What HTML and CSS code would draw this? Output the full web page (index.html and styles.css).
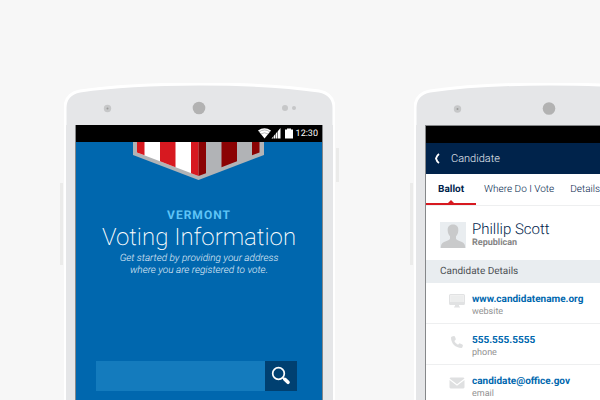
FILE: index.html
```html
<!DOCTYPE html>
<html lang="en">
<head>
<meta charset="utf-8">
<title>Voting Information</title>
<link rel="stylesheet" href="styles.css">
</head>
<body>
<main class="showcase">
  <section class="phone">
    <svg class="cap" viewBox="0 0 271 42" aria-hidden="true">
      <path class="shell" d="M1 44V25C1 15 6 10 16 8C50 3 95 1 135.500 1S221 3 255 8C265 10 270 15 270 25V44"/>
      <circle class="dot" cx="43.500" cy="25.500" r="3.700"/><circle class="pin" cx="43.500" cy="25.500" r="1"/>
      <circle class="speaker" cx="135" cy="25" r="6.300"/>
      <circle class="dot" cx="221" cy="25" r="3"/><circle class="dot" cx="230" cy="25" r="2"/>
    </svg>
    <span class="side volume"></span><span class="side power"></span>
    <div class="shell-body">
      <div class="screen home">
        <div class="status">
          <svg class="status-icons" viewBox="0 0 36 11" aria-hidden="true">
            <path d="M0 2.500Q6.500-2 13 2.500L6.500 10.500Z" fill="#fff"/>
            <path d="M1 4Q6.500 0 12 4M2.800 6Q6.500 3.500 10.200 6" fill="none" stroke="#777" stroke-width=".5"/>
            <path d="M22.500 0V10.500H13.500Z" fill="#fff"/>
            <path d="M15.500 7v4M17.500 5v6M19.500 3v8" stroke="#000" stroke-width=".5"/>
            <path d="M27 1.500h2V.500h4v1h2v9h-8z" fill="#fff"/>
          </svg>
          <time>12:30</time>
        </div>
        <svg class="shield" viewBox="0 0 131 38" aria-hidden="true">
          <path d="M0 0H131V13L65.500 38L0 13Z" fill="#b1b3b6"/>
          <path d="M4 0H65.500V34L4 10.500Z" fill="#fff"/>
          <path d="M4 0h7.500v13.300L4 10.500ZM27 0h15.500v25.200L27 19.300ZM58 0h7.500v34L58 31.200Z" fill="#d71920"/>
          <path d="M65.500 0H73v31.200L65.500 34ZM88.500 0H104v19.300L88.500 25.200ZM119 0h7.500v10.500L119 13.300Z" fill="#8b0304"/>
        </svg>
        <p class="state">VERMONT</p>
        <h1>Voting Information</h1>
        <p class="intro">Get started by providing your address<br>where you are registered to vote.</p>
        <form class="search">
          <input type="text" aria-label="Your address">
          <button type="button" aria-label="Search">
            <svg viewBox="0 0 20 20" aria-hidden="true"><circle cx="7.500" cy="7.500" r="5.800" fill="none" stroke="#fff" stroke-width="1.700"/><path d="M11.500 11.500l2 2" stroke="#fff" stroke-width="1.500"/><path d="M13.800 13.300l3.200 3" stroke="#fff" stroke-width="3.600" stroke-linecap="round"/></svg>
          </button>
        </form>
      </div>
    </div>
  </section>

  <section class="phone">
    <svg class="cap" viewBox="0 0 271 42" aria-hidden="true">
      <path class="shell" d="M1 44V25C1 15 6 10 16 8C50 3 95 1 135.500 1S221 3 255 8C265 10 270 15 270 25V44"/>
      <circle class="dot" cx="43.500" cy="26" r="3.700"/><circle class="pin" cx="43.500" cy="26" r="1"/>
      <circle class="speaker" cx="135" cy="25.500" r="6.300"/>
      <circle class="dot" cx="221" cy="25" r="3"/><circle class="dot" cx="230" cy="25" r="2"/>
    </svg>
    <span class="side volume"></span>
    <div class="shell-body">
      <div class="screen candidate">
        <div class="status"></div>
        <header class="bar">
          <a href="#" aria-label="Back"><svg viewBox="0 0 6 11" aria-hidden="true"><path d="M5 1Q2.800 2.500 2 5.500Q2.800 8.500 5 10" fill="none" stroke="#fff" stroke-width="1.900"/></svg></a>
          <h2>Candidate</h2>
        </header>
        <nav class="tabs">
          <a class="active" href="#">Ballot</a>
          <a href="#">Where Do I Vote</a>
          <a href="#">Details</a>
        </nav>
        <div class="profile">
          <svg viewBox="0 0 26 26" aria-hidden="true"><path fill="#e9edf0" d="M0 0h26v26H0z"/><path fill="#c9cacb" d="M13 2.500c3.700 0 5.700 2.300 5.300 6.200-.2 2.300-1.100 4.300-2.300 5.500v2.600c.6 1.600 3.400 2 6 3.200 2.400 1 3.200 3 3.200 6H.800c0-3 .8-5 3.200-6 2.600-1.200 5.400-1.600 6-3.200v-2.600c-1.200-1.200-2.100-3.200-2.300-5.500C7.300 4.800 9.300 2.500 13 2.500z"/></svg>
          <div>
            <h3>Phillip Scott</h3>
            <p>Republican</p>
          </div>
        </div>
        <h4>Candidate Details</h4>
        <ul class="contacts">
          <li>
            <svg viewBox="0 0 16 16" aria-hidden="true"><path fill="#e1e2e3" fill-rule="evenodd" d="M1.500 1h13q1.500 0 1.500 1.500v8q0 1.500-1.500 1.500H10v1.500h1v1H5v-1h1V12H1.500Q0 12 0 10.500v-8Q0 1 1.500 1zM1.300 2.300v6.700h13.400V2.300z"/><path fill="#eceded" d="M1.300 2.300h13.400v6.700H1.300z"/></svg>
            <div><a href="#">www.candidatename.org</a><span>website</span></div>
          </li>
          <li>
            <svg viewBox="0 0 16 16" aria-hidden="true"><path fill="#dedfe0" d="M3 2.500L5 2q.7 0 1 .8l.8 2.200q.1.600-.4 1L5.300 7Q6.500 9.600 9 10.800l1-1.100q.5-.5 1.100-.3l2.200 1q.7.300.6 1l-.5 1.800q-.3.700-1 .8C6.500 14 2 9.500 2 3.600Q2 2.800 3 2.500z"/></svg>
            <div><a href="#">555.555.5555</a><span>phone</span></div>
          </li>
          <li>
            <svg viewBox="0 0 16 16" aria-hidden="true"><path fill="#dfe0e1" d="M1.500 2.500h13l1 1L8 9.200.500 3.500zM.500 5L8 10.800 15.500 5v7.500l-1 1h-13l-1-1z"/></svg>
            <div><a href="#">candidate@office.gov</a><span>email</span></div>
          </li>
        </ul>
      </div>
    </div>
  </section>
</main>
</body>
</html>
```
FILE: styles.css
```css
* { box-sizing: border-box; }
body {
  margin: 0;
  background: #f7f7f7;
  font-family: Roboto, "Liberation Sans", sans-serif;
  text-rendering: geometricPrecision;
}
h1, h2, h3, h4, p, ul { margin: 0; padding: 0; font-weight: 400; }
a { color: inherit; text-decoration: none; }
svg { display: block; flex: none; }

.showcase {
  display: flex;
  gap: 79px;
  height: 100vh;
  padding: 83px 0 0 64px;
  overflow: hidden;
}
.phone {
  position: relative;
  display: flex;
  flex: none;
  flex-direction: column;
  width: 271px;
  min-height: 480px;
}
.cap { width: 100%; }
.shell { fill: #e5e6e8; stroke: #fff; stroke-width: 3; }
.dot { fill: #c6c7c8; }
.pin { fill: #999; }
.speaker { fill: #b2b2b2; }
.side { position: absolute; width: 3px; background: #ebebea; }
.volume { top: 100px; left: -4px; height: 82px; }
.power { top: 65px; right: -4px; height: 34px; }

.shell-body {
  display: flex;
  flex: 1;
  padding: 0 10px 60px 9px;
  background: #e5e6e8;
  border: solid #fff;
  border-width: 0 2px;
}
.screen {
  display: flex;
  flex: 1;
  flex-direction: column;
  min-width: 0;
  border: solid #858789;
  border-width: 0 1px;
}
.status {
  display: flex;
  flex: none;
  align-items: center;
  justify-content: flex-end;
  gap: 2px;
  height: 17px;
  padding-right: 4px;
  background: #000;
  color: #fff;
  font-size: 9px;
}
.status-icons { width: 36px; height: 11px; }

.home { background: #0067ae; text-align: center; }
.shield { width: 131px; height: 38px; margin-right: 2px; align-self: center; }
.state {
  margin-top: 27px;
  color: #5fc4f6;
  font-size: 12px;
  font-weight: 700;
  letter-spacing: 1px;
  line-height: 16px;
}
h1 { color: #fff; font-size: 24px; font-weight: 200; line-height: 29px; }
.intro { color: #e2f0fa; font-size: 10px; font-style: italic; font-weight: 300; line-height: 12px; padding-top: 1px; }
.search { display: flex; height: 30px; margin: 84px 25px 0 20px; }
.search input {
  flex: 1;
  min-width: 0;
  padding: 0 8px;
  border: 0;
  background: #147bbd;
  color: #fff;
  font: inherit;
}
.search button {
  display: grid;
  place-items: center;
  width: 32px;
  padding: 0;
  border: 0;
  background: #004071;
}
.search svg { width: 20px; height: 20px; }

.candidate { background: #fff; border-top: 1px solid #858789; }
.bar {
  display: flex;
  align-items: center;
  gap: 11px;
  height: 31px;
  padding-left: 8px;
  background: #00234b;
  color: #e6ebf1;
}
.bar svg { width: 6px; height: 11px; }
h2 { font-size: 11px; font-weight: 300; }
.tabs {
  display: flex;
  height: 32px;
  border-bottom: 1px solid #eeeff0;
  color: #00234b;
  font-size: 10px;
  font-weight: 300;
  line-height: 31px;
  white-space: nowrap;
}
.tabs a { flex: none; padding: 0 8px; }
.tabs .active {
  position: relative;
  padding: 0 12px;
  border-bottom: 2px solid #d71920;
  font-weight: 700;
}
.active::after {
  content: "";
  position: absolute;
  bottom: 0;
  left: calc(50% - 3px);
  border: solid transparent;
  border-width: 0 3px 3px;
  border-bottom-color: #d71920;
}
.profile { display: flex; gap: 6px; align-items: center; height: 54px; padding: 4px 14px 0; }
.profile svg { width: 26px; height: 26px; }
h3 { color: #00234b; font-size: 15px; font-weight: 300; line-height: 17px; }
.profile p { color: #858585; font-size: 9px; font-weight: 700; line-height: 11px; }
h4 { padding-left: 14px; background: #e9edf0; color: #4c5054; font-size: 10px; line-height: 23px; }
.contacts { list-style: none; }
.contacts li {
  display: flex;
  gap: 7px;
  height: 41px;
  padding: 10px 0 0 23px;
  border-bottom: 1px solid #eeeff0;
}
.contacts svg { width: 16px; height: 16px; }
.contacts a { display: block; color: #0067ae; font-size: 10px; font-weight: 700; line-height: 14px; }
.contacts span { display: block; color: #929292; font-size: 9px; line-height: 11px; }
```
